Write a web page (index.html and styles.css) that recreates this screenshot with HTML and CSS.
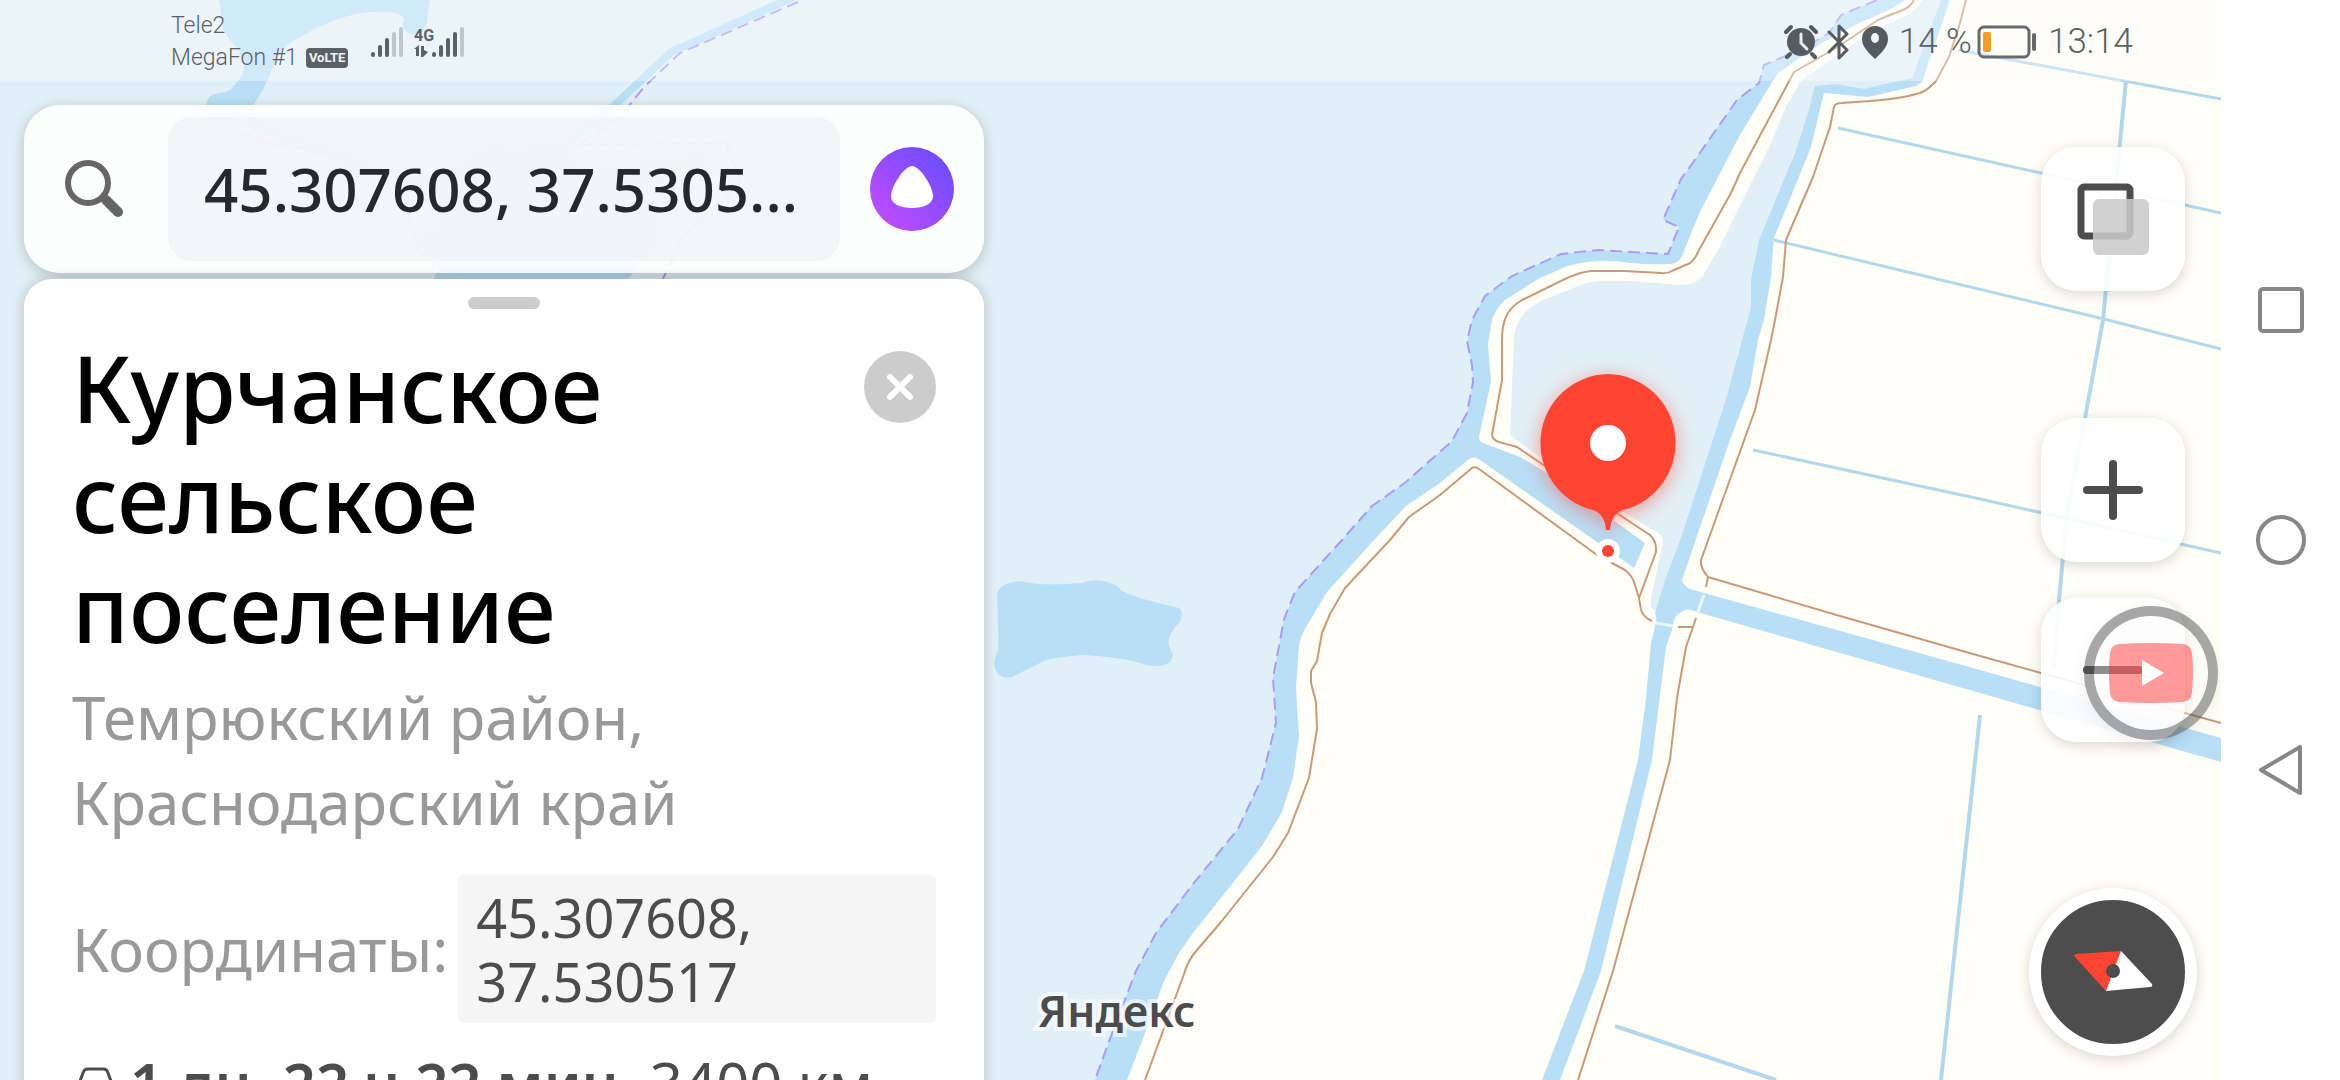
FILE: index.html
```html
<!DOCTYPE html>
<html lang="ru">
<head>
    <meta charset="UTF-8" />
    <meta name="viewport" content="width=device-width, initial-scale=1" />
    <title>Яндекс Карты</title>
    <link rel="stylesheet" href="styles.css">
</head>
<body>

<div class="screen">
    <!-- Карта -->
    <svg class="map" viewBox="0 0 2221 1080" preserveAspectRatio="xMinYMin slice" aria-hidden="true">
        <rect class="sea" width="2221" height="1080"/>

        <!-- залив слева сверху -->
        <path class="water" d="M219 0L223 27Q226 38 239 50L244 67Q244 75 237 82Q230 93 220 93Q210 94 208 99L202 118Q204 124 210 125Q222 125 242 115L252 107L263 90L276 60Q282 46 300 37Q320 25 344 17Q366 11 386 12Q400 12 404 19Q400 28 408 33Q418 38 426 27L430 0Z"/>
        <path class="water" d="M469 160Q482 148 494 143Q502 150 513 147Q540 147 564 145L572 158Q578 172 590 172L593 172Q625 165 676 157Q712 148 711 160Q706 172 690 182Q670 195 663 207L651 253Q640 265 628 279H434L438 267Q436 255 420 248V233Q430 228 443 227L440 213Q436 203 415 200Q402 192 408 177Q430 170 459 173Z"/>
        <path class="stream" stroke-width="8" d="M796 -4L671 52L615 105L563 147"/>
        <path class="stream" stroke-width="8" d="M248 108Q250 125 264 130Q290 142 319 147Q345 158 380 172L410 176"/>
        <path class="stream" stroke-width="4" d="M293 115L328 130L408 150L446 163"/>
        <path class="border" d="M798 2L680 53L644 87L619 118L577 145L726 143L740 180L733 190L682 237L663 279"/>
        <path class="border" d="M242 132L265 143L306 148L357 167L408 193V213L418 250L434 263L432 275"/>

        <!-- озеро -->
        <path class="water" d="M1009 583Q1017 580 1025 582Q1042 586 1082 583Q1092 579 1103 581Q1117 584 1121 590Q1127 596 1179 608Q1184 612 1180 622Q1166 636 1169 646Q1177 659 1167 664Q1155 669 1140 663Q1119 657 1082 655Q1060 657 1046 660L1012 677Q999 680 995 668Q993 661 998 650Q999 640 997 595Q999 585 1009 583Z"/>

        <!-- суша и водная полоса вдоль берега -->
        <path class="water" d="M1877 0L1841 15L1829 33L1804 48L1764 65L1759 83L1737 100L1697 157L1681 179L1663 220L1679 227L1668 254L1598 250L1561 254L1512 276L1485 296L1472 320L1467 341L1472 365L1473 382L1467 413L1452 441L1406 482L1372 506L1342 540L1295 592L1284 619L1273 678L1276 723L1262 778L1238 829L1193 884L1156 933L1136 971L1111 1036L1095 1080H2221V0Z"/>
        <path class="land" d="M1905 0L1893 8L1855 25L1822 43L1778 73L1763 97L1740 135L1731 152L1699 214L1684 251Q1681 263 1671 264Q1650 265 1631 263Q1610 260 1598 261Q1580 262 1565 267L1538 279L1505 300Q1496 308 1492 320L1488 344L1491 382L1479 437Q1479 442 1483 443L1520 457L1547 473L1613 520L1645 543L1663 560L1672 500L1760 240L1815 84H1900L1950 0Z"/>
        <path class="land" d="M1480 460Q1475 456 1469 459L1440 483L1406 506L1376 538L1327 592L1311 619Q1300 635 1299 647L1296 688L1299 736L1293 778L1282 812L1262 846L1221 898L1193 933L1179 953L1164 981L1144 1036L1127 1080H1542L1584 971L1638 760L1646 698L1651 643L1658 613L1664 560L1645 543L1634 568L1620 558L1597 542Z"/>
        <path class="sea" d="M1922 0Q1916 12 1905 16Q1880 26 1855 43L1813 72Q1800 80 1797 88L1786 107L1771 143L1719 248L1707 269Q1700 282 1690 284Q1680 286 1658 283Q1630 280 1598 281Q1585 282 1571 289L1542 300Q1525 310 1520 319Q1514 330 1514 340L1510 435L1540 457L1620 510L1657 532Q1663 536 1663 542L1651 598V607L1657 613L1690 560L1760 330L1765 240L1825 86L1880 90L1920 80L1945 0Z"/>
        <path class="water" d="M1941 0L1912 78L1864 89L1836 84L1815 86L1809 110L1795 153L1759 240L1751 280V307L1727 396L1682 535L1664 583L1655 613L1666 655H1700L1800 500L1830 100L1950 82L1960 0Z"/>
        <path class="land" d="M1950 0L1922 82L1916 86L1868 97L1824 93L1811 147L1774 238L1771 277L1764 320L1758 340L1750 387L1730 440L1682 580Q1682 584 1690 589L1980 670L2221 738V0Z"/>
        <path class="land" d="M2221 762L1980 693L1697 612Q1688 608 1683 611L1677 615Q1674 618 1672 630L1666 647L1660 695L1652 760L1601 971L1560 1080H2221Z"/>

        <!-- каналы -->
        <path class="drain" d="M1958 50L2221 99M1838 128L2221 213M1774 240L2104 319L2221 349M1753 450L1980 499L2221 553"/>
        <path class="drain wide" d="M2126 80L2103 320L2085 418L2067 513L2059 600L2054 667M1980 715L1941 1080M1615 1026L1776 1080"/>

        <!-- граница -->
        <path class="border" d="M1877 0L1841 15L1829 33L1804 48L1764 65L1759 83L1737 100L1697 157L1681 179L1663 220L1679 227L1668 254L1598 250L1561 254L1512 276L1485 296L1472 320L1467 341L1472 365L1473 382L1467 413L1452 441L1406 482L1372 506L1342 540L1295 592L1284 619L1273 678L1276 723L1262 778L1238 829L1193 884L1156 933L1136 971L1111 1036L1095 1080"/>

        <!-- дороги -->
        <path class="road" d="M1914 0Q1910 8 1900 11L1878 20L1836 48L1794 72L1786 87L1740 173L1731 193L1699 250Q1694 262 1688 264L1674 270Q1668 274 1661 273L1624 271H1591Q1580 272 1565 279L1522 300Q1510 307 1506 317Q1502 326 1502 340V380L1492 435Q1493 440 1499 442L1517 447L1542 464L1618 514L1650 535Q1657 542 1656 552L1639 598"/>
        <path class="road" d="M1145 1080L1184 974Q1188 960 1197 950L1221 922L1273 857L1288 833L1309 778L1317 729L1316 702L1311 683V671L1317 661L1322 633L1330 614L1345 588L1390 540L1409 517L1440 495L1472 468Q1475 466 1479 469L1597 555L1625 570Q1632 575 1635 585L1639 598L1641 610Q1644 618 1652 621"/>
        <path class="road" d="M1966 0L1960 23L1949 57L1936 81Q1928 90 1920 93Q1900 99 1870 101L1842 103Q1835 103 1834 107L1830 127L1813 177L1786 240L1783 277L1775 320L1771 340L1755 410L1701 560Q1700 568 1708 577L1840 616L1980 656L2221 723M1708 577L1706 587"/>
        <path class="road" d="M1696 618L1693 627L1686 647L1677 698L1670 760L1613 971L1578 1080M1678 627H1693"/>
        <path class="bridge" d="M1704 595L1698 612M1656 623L1673 626"/>

        <!-- метка -->
        <g class="pin">
            <path d="M1608 374a69 69 0 0 1 15 136q-12 4-13 20h-4q-1-16-13-20a69 69 0 0 1 15-136Z"/>
        </g>
        <circle cx="1608" cy="443" r="18" fill="#fff"/>
        <circle cx="1608" cy="551" r="12" fill="#fff"/>
        <circle cx="1608" cy="551" r="6" fill="#ff4433"/>
    </svg>

    <header class="status">
        <div class="carriers">
            <span>Tele2</span>
            <span>MegaFon #1 <b class="volte">VoLTE</b></span>
        </div>
        <svg class="signal" width="96" height="34" viewBox="0 0 96 34" aria-hidden="true">
            <g stroke="#5b6166" stroke-width="4" stroke-linecap="round">
                <path d="M3 29v1M10 22v8M17 15v15"/>
                <path d="M24 9v21M31 4v26" opacity=".3"/>
                <path d="M64 29v1M71 22v8M78 15v15M85 9v21"/>
                <path d="M92 4v26" opacity=".3"/>
            </g>
            <path d="M44 24l5-4v11h-3v-7zM51 21h3v4l4 2-5 5h-2z" fill="#5b6166"/>
            <text x="44" y="16" class="net">4G</text>
        </svg>
        <div class="indicators">
            <svg width="34" height="36" viewBox="0 0 34 36" fill="none" stroke="#565b5f" aria-hidden="true">
                <circle cx="17" cy="18" r="14" fill="#565b5f" stroke="none"/>
                <path d="M6 30l-3 3M28 30l3 3M2 8l5-5M32 8l-5-5" stroke-width="4" stroke-linecap="round"/>
                <path d="M17 10v9l6 6" stroke="#e4eef5" stroke-width="3" stroke-linecap="round"/>
            </svg>
            <svg width="34" height="36" viewBox="0 0 34 36" fill="none" stroke="#565b5f" stroke-width="3" stroke-linejoin="round" stroke-linecap="round" aria-hidden="true">
                <path d="M8 8l18 18-8 8V2l8 8L8 28"/>
            </svg>
            <svg width="34" height="36" viewBox="0 0 34 36" aria-hidden="true">
                <path fill="#565b5f" fill-rule="evenodd" d="M17 2a13 13 0 0 1 13 13c0 8-7 14-13 20C11 29 4 23 4 15A13 13 0 0 1 17 2zM17 9a4 5 0 1 0 0 10a4 5 0 1 0 0-10z"/>
            </svg>
            <span class="percent">14 %</span>
            <svg class="battery" width="60" height="38" viewBox="0 0 60 38" aria-hidden="true">
                <rect x="2" y="4" width="50" height="30" rx="5" fill="none" stroke="#666a6c" stroke-width="3"/>
                <rect x="6" y="9" width="8" height="20" rx="2" fill="#fb9b20"/>
                <path d="M57 12v14" stroke="#666a6c" stroke-width="4" stroke-linecap="round"/>
            </svg>
            <span>13:14</span>
        </div>
    </header>

    <main>
        <section class="panel">
            <form class="search" role="search">
                <label for="query" aria-label="Поиск">
                    <svg width="60" height="60" viewBox="0 0 60 60" fill="none" stroke="#666" aria-hidden="true">
                        <circle cx="24" cy="24" r="20" stroke-width="6"/>
                        <path d="M38 37l3 3" stroke-width="7"/>
                        <path d="M42 41l12 12" stroke-width="10" stroke-linecap="round"/>
                    </svg>
                </label>
                <input type="text" id="query" name="query" value="45.307608, 37.5305..." />
                <button type="button" class="alice" aria-label="Алиса">
                    <svg width="84" height="84" viewBox="0 0 84 84" aria-hidden="true">
                        <defs>
                            <linearGradient id="violet" x1="0" y1="1" x2="1" y2="0">
                                <stop offset="0.1" stop-color="#c14bff"/>
                                <stop offset="0.9" stop-color="#6a4dff"/>
                            </linearGradient>
                        </defs>
                        <circle cx="42" cy="42" r="42" fill="url(#violet)"/>
                        <path d="M42 19c8 0 21 21 21 30 0 8-9 12-21 12s-21-4-21-12c0-9 13-30 21-30z" fill="#fff"/>
                    </svg>
                </button>
            </form>

            <article class="sheet">
                <div class="handle"></div>
                <div class="heading">
                    <h1>Курчанское сельское поселение</h1>
                    <button type="button" class="close" aria-label="Закрыть">
                        <svg width="72" height="72" viewBox="0 0 72 72" aria-hidden="true">
                            <path d="M26 26l20 20M46 26L26 46" stroke="#fff" stroke-width="6" stroke-linecap="round"/>
                        </svg>
                    </button>
                </div>
                <p class="region">Темрюкский район, Краснодарский край</p>
                <div class="coords">
                    <span>Координаты:</span>
                    <span class="chip">45.307608, 37.530517</span>
                </div>
                <p class="route">
                    <svg width="42" height="56" viewBox="0 0 42 56" fill="none" stroke="#4d4d4d" stroke-width="3" aria-hidden="true">
                        <path d="M8 52V26l3-8q1-4 5-4h15q4 0 5 4l3 8v26z"/>
                    </svg>
                    <span><b>1 дн. 22 ч 22 мин.</b> 3400 км</span>
                </p>
            </article>
        </section>

        <div class="logo">Яндекс</div>

        <div class="controls">
            <button type="button" aria-label="Слои">
                <svg width="76" height="76" viewBox="0 0 76 76" aria-hidden="true">
                    <rect x="6" y="6" width="49" height="49" rx="3" fill="none" stroke="#4d4d4d" stroke-width="7"/>
                    <rect x="18" y="18" width="56" height="56" rx="6" fill="#cacaca" opacity=".87"/>
                </svg>
            </button>
            <div class="zoom">
                <button type="button" aria-label="Приблизить">
                    <svg width="60" height="60" viewBox="0 0 60 60" aria-hidden="true">
                        <path d="M4 30h52M30 4v52" stroke="#4d4d4d" stroke-width="8" stroke-linecap="round"/>
                    </svg>
                </button>
                <button type="button" aria-label="Отдалить">
                    <svg width="60" height="60" viewBox="0 0 60 60" aria-hidden="true">
                        <path d="M4 30h52" stroke="#4d4d4d" stroke-width="8" stroke-linecap="round"/>
                    </svg>
                </button>
            </div>
            <button type="button" class="compass" aria-label="Компас">
                <svg width="80" height="42" viewBox="0 0 80 42" aria-hidden="true">
                    <path d="M1 5q0-2 2-2L48 0 33 40z" fill="#ff4433"/>
                    <path d="M48 0l31 33q1 3-2 3l-44 4z" fill="#fff"/>
                    <circle cx="40" cy="20" r="7" fill="#4d4d4d"/>
                </svg>
            </button>
        </div>
    </main>

    <!-- плавающая кнопка поверх всего -->
    <button type="button" class="bubble" aria-label="YouTube">
        <svg width="86" height="60" viewBox="0 0 86 60" aria-hidden="true">
            <path d="M11 1q32-2 64 0 8 1 9 9 2 20 0 40-1 8-9 9-32 2-64 0-8-1-9-9-2-20 0-40 1-8 9-9z" fill="#ff2a2a" opacity=".47"/>
            <path d="M34 17l22 13-22 13z" fill="#fff"/>
        </svg>
    </button>
</div>

<nav class="keys">
    <button type="button" aria-label="Недавние">
        <svg width="50" height="50" viewBox="0 0 50 50"><rect x="4" y="4" width="42" height="42" rx="3"/></svg>
    </button>
    <button type="button" aria-label="Домой">
        <svg width="50" height="50" viewBox="0 0 50 50"><circle cx="25" cy="25" r="23"/></svg>
    </button>
    <button type="button" aria-label="Назад">
        <svg width="50" height="50" viewBox="0 0 50 50"><path d="M5 25L44 2v46z"/></svg>
    </button>
</nav>

</body>
</html>
```

FILE: styles.css
```css
* {
    box-sizing: border-box;
}

body {
    display: flex;
    height: 100vh;
    margin: 0;
    overflow: hidden;
    background: #fefefe;
    color: #4c4c4c;
    font-family: "Noto Sans", "Open Sans", sans-serif;
}

button {
    display: flex;
    align-items: center;
    justify-content: center;
    flex: none;
    padding: 0;
    border: none;
    background: none;
    cursor: pointer;
}

svg {
    display: block;
    flex: none;
}

h1, p {
    margin: 0;
}

.screen {
    position: relative;
    display: flex;
    flex-direction: column;
    flex: 1;
    min-width: 0;
    overflow: hidden;
    background: #e1f0f6;
}

/* Карта */
.map {
    position: absolute;
    inset: 0;
    width: 100%;
    height: 100%;
}

.sea { fill: #e1f0f6; }
.water { fill: #b8dff6; }
.land { fill: #fffef7; }
.stream { fill: none; stroke: #b8dff6; }
.road { fill: none; stroke: #c99a7a; stroke-width: 2; stroke-linejoin: round; }
.drain { fill: none; stroke: #b2d9eb; stroke-width: 3; }
.drain.wide { stroke-width: 4; }
.border { fill: none; stroke: #aa9cf5; stroke-width: 2; stroke-dasharray: 12 6; }
.bridge { stroke: #e9f5fa; stroke-width: 3; }

.pin {
    fill: #ff4433;
    filter: drop-shadow(0 4px 10px rgba(255, 68, 51, 0.5));
}

/* Строка состояния */
.status {
    position: relative;
    display: flex;
    align-items: center;
    flex: none;
    height: 81px;
    padding: 2px 88px 0 171px;
    background: rgba(255, 255, 255, 0.35);
    color: #5b6166;
    font-family: Roboto, sans-serif;
    font-weight: 300;
}

.carriers {
    display: flex;
    flex-direction: column;
    font-size: 23px;
    line-height: 32px;
}

.carriers span {
    display: flex;
    align-items: center;
    gap: 8px;
}

.volte {
    padding: 0 3px;
    border-radius: 4px;
    background: #5b6166;
    color: #edf5fa;
    font-size: 13px;
    font-weight: 700;
    line-height: 20px;
}

.signal {
    margin-left: 22px;
}

.net {
    fill: #5b6166;
    font-size: 16px;
    font-weight: 700;
}

.indicators {
    display: flex;
    align-items: center;
    gap: 3px;
    margin-left: auto;
    font-size: 35px;
    line-height: 48px;
}

.percent {
    margin-left: 4px;
}

.battery {
    margin: 0 8px 0 2px;
}

main {
    position: relative;
    display: flex;
    flex: 1;
    min-height: 0;
    padding: 24px 24px 0;
}

.panel {
    display: flex;
    flex-direction: column;
    flex: none;
    gap: 6px;
    width: 960px;
}

/* Поиск */
.search {
    display: flex;
    align-items: center;
    flex: none;
    padding: 12px 30px 12px 40px;
    border-radius: 36px;
    background: rgba(255, 255, 255, 0.9);
    box-shadow: 0 3px 14px rgba(0, 0, 0, 0.2);
}

.search input {
    flex: 1;
    min-width: 0;
    height: 144px;
    margin: 0 30px 0 44px;
    padding: 0 36px;
    border: none;
    border-radius: 24px;
    outline: none;
    background: rgba(236, 236, 238, 0.5);
    color: #262829;
    font-family: inherit;
    font-size: 60px;
    font-weight: 500;
    text-overflow: ellipsis;
}

/* Карточка места */
.sheet {
    flex: none;
    padding: 18px 48px;
    border-radius: 28px 28px 0 0;
    background: #fff;
    box-shadow: 0 0 14px rgba(0, 0, 0, 0.2);
}

.handle {
    width: 72px;
    height: 12px;
    margin: 0 auto 24px;
    border-radius: 6px;
    background: #cccccc;
}

.heading {
    display: flex;
    justify-content: space-between;
}

h1 {
    width: 700px;
    color: #000;
    font-size: 92px;
    font-weight: 500;
    line-height: 110px;
}

.close {
    width: 72px;
    height: 72px;
    margin-top: 18px;
    border-radius: 50%;
    background: #cccccc;
}

.region {
    width: 700px;
    margin-top: 12px;
    color: #999;
    font-size: 60px;
    line-height: 85px;
}

.coords {
    display: flex;
    align-items: center;
    gap: 10px;
    margin-top: 30px;
    color: #999;
    font-size: 60px;
}

.chip {
    flex: 1;
    padding: 10px 160px 10px 18px;
    border-radius: 6px;
    background: #f5f5f5;
    color: #4c4c4c;
    font-size: 54px;
    line-height: 64px;
}

.route {
    display: flex;
    align-items: center;
    gap: 16px;
    margin-top: 20px;
    font-size: 58px;
    line-height: 80px;
    white-space: nowrap;
}

.route b {
    font-weight: 600;
}

.logo {
    align-self: flex-end;
    margin: 0 0 34px 54px;
    font-size: 44px;
    font-weight: 600;
    line-height: 72px;
    -webkit-text-stroke: 8px rgba(255, 255, 255, 0.6);
    paint-order: stroke fill;
}

/* Кнопки карты */
.controls {
    display: flex;
    flex-direction: column;
    align-items: center;
    margin-left: auto;
    padding: 42px 0 24px;
}

.controls button {
    width: 144px;
    height: 144px;
    border-radius: 36px;
    background: rgba(255, 255, 255, 0.9);
    box-shadow: 0 3px 14px rgba(0, 0, 0, 0.16);
}

.zoom {
    display: flex;
    flex-direction: column;
    gap: 36px;
    margin-top: 127px;
}

.controls .compass {
    width: 168px;
    height: 168px;
    margin-top: auto;
    border: 12px solid #fff;
    border-radius: 50%;
    background: #4d4d4d;
}

.bubble {
    position: absolute;
    top: 606px;
    right: 3px;
    width: 134px;
    height: 134px;
    border: 10px solid rgba(80, 80, 80, 0.5);
    border-radius: 50%;
    background: rgba(250, 250, 250, 0.38);
    background-clip: padding-box;
    box-shadow: 0 6px 20px rgba(0, 0, 0, 0.06);
}

/* Системная навигация */
.keys {
    display: flex;
    flex-direction: column;
    align-items: center;
    justify-content: center;
    flex: none;
    gap: 180px;
    width: 119px;
}

.keys svg {
    fill: none;
    stroke: #878787;
    stroke-width: 4;
    stroke-linejoin: round;
}
```
